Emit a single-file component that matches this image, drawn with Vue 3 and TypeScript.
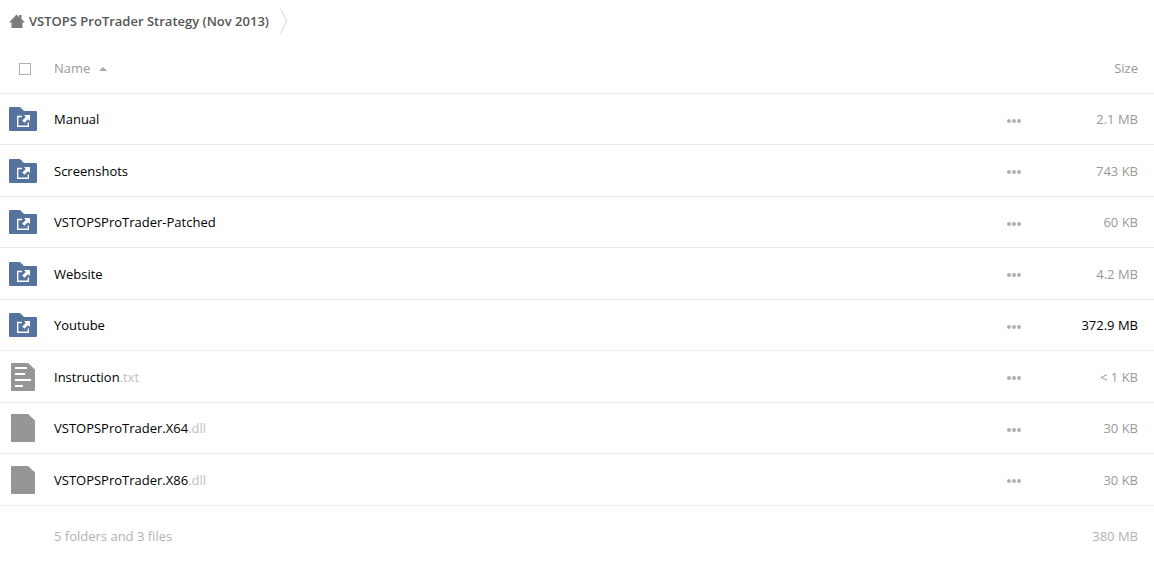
<script setup lang="ts">
import { ref, computed } from 'vue'

interface Entry {
  kind: 'folder' | 'text' | 'file'
  name: string
  ext?: string
  size: string
  large?: boolean
}

const entries: Entry[] = [
  { kind: 'folder', name: 'Manual', size: '2.1 MB' },
  { kind: 'folder', name: 'Screenshots', size: '743 KB' },
  { kind: 'folder', name: 'VSTOPSProTrader-Patched', size: '60 KB' },
  { kind: 'folder', name: 'Website', size: '4.2 MB' },
  { kind: 'folder', name: 'Youtube', size: '372.9 MB', large: true },
  { kind: 'text', name: 'Instruction', ext: '.txt', size: '< 1 KB' },
  { kind: 'file', name: 'VSTOPSProTrader.X64', ext: '.dll', size: '30 KB' },
  { kind: 'file', name: 'VSTOPSProTrader.X86', ext: '.dll', size: '30 KB' },
]

const allSelected = ref(false)
const ascending = ref(true)
const rows = computed(() => (ascending.value ? entries : [...entries].reverse()))
</script>

<template>
  <main class="listing">
    <nav class="crumbs" aria-label="Breadcrumb">
      <a class="crumb" href="#">
        <svg class="home" width="16" height="14" viewBox="0 0 16 14" aria-hidden="true">
          <path d="M7.5 0.5 L10 3 V1 H12.5 V5 L16 8.5 H13.5 V14 H2.5 V8.5 H0 Z" fill="#7d7d7d" />
        </svg>
        <span>VSTOPS ProTrader Strategy (Nov 2013)</span>
      </a>
      <svg class="chevron" width="8" height="24" viewBox="0 0 8 24" aria-hidden="true">
        <path d="M0.5 0 L7 12 L0.5 24" fill="none" stroke="#d4d4d4" />
      </svg>
    </nav>

    <table class="files">
      <thead>
        <tr>
          <th class="col-icon">
            <input v-model="allSelected" class="check" type="checkbox" aria-label="Select all" />
          </th>
          <th class="col-name">
            <button class="sort" type="button" @click="ascending = !ascending">
              Name
              <svg class="arrow" :class="{ down: !ascending }" width="8" height="4" viewBox="0 0 8 4" aria-hidden="true">
                <path d="M4 0 L8 4 H0 Z" fill="#a6a6a6" />
              </svg>
            </button>
          </th>
          <th class="col-menu"></th>
          <th class="col-size">Size</th>
        </tr>
      </thead>
      <tbody>
        <tr v-for="row in rows" :key="row.name">
          <td class="col-icon">
            <svg v-if="row.kind === 'folder'" class="icon" width="28" height="24" viewBox="0 0 28 24" aria-hidden="true">
              <path d="M0 1 Q0 0 1 0 H10 Q11 0 11.6 0.6 L15 4 H27 Q28 4 28 5 V23 Q28 24 27 24 H1 Q0 24 0 23 Z" fill="#55739c" />
              <path d="M13 9.5 H8.7 V19.2 H19.3 V15.5" fill="none" stroke="#fff" stroke-width="1.4" />
              <path d="M15 8 H21 V14 L19 12.2 L15.4 15.8 L13.2 13.6 L16.8 10 Z" fill="#fff" />
            </svg>
            <svg v-else class="icon doc" width="24" height="28" viewBox="0 0 24 28" aria-hidden="true">
              <path d="M0 1 Q0 0 1 0 H17 L24 6.5 V27 Q24 28 23 28 H1 Q0 28 0 27 Z" fill="#969696" />
              <path v-if="row.kind === 'text'" d="M4 4 H16 V6 H4 Z M4 10 H14 V12 H4 Z M4 16 H20 V18 H4 Z M4 22 H12 V24 H4 Z" fill="#fff" />
            </svg>
          </td>
          <td class="col-name">
            <a href="#">{{ row.name }}<span v-if="row.ext" class="ext">{{ row.ext }}</span></a>
          </td>
          <td class="col-menu">
            <button class="more" type="button" :aria-label="'Actions for ' + row.name">
              <svg width="14" height="4" viewBox="0 0 14 4" aria-hidden="true">
                <g fill="#b0b0b0">
                  <circle cx="2" cy="2" r="2" />
                  <circle cx="7" cy="2" r="2" />
                  <circle cx="12" cy="2" r="2" />
                </g>
              </svg>
            </button>
          </td>
          <td class="col-size" :class="{ large: row.large }">{{ row.size }}</td>
        </tr>
      </tbody>
      <tfoot>
        <tr>
          <td></td>
          <td class="col-name">5 folders and 3 files</td>
          <td></td>
          <td class="col-size">380 MB</td>
        </tr>
      </tfoot>
    </table>
  </main>
</template>

<style>
body {
  margin: 0;
  background: #fff;
}
</style>

<style scoped>
.listing {
  font: 13px/18px "Open Sans", "Noto Sans", sans-serif;
  color: #999;
}

a {
  color: #000;
  text-decoration: none;
}

button {
  display: block;
  padding: 0;
  border: 0;
  background: none;
  font: inherit;
  color: inherit;
  cursor: pointer;
}

svg {
  display: block;
}

.crumbs {
  display: flex;
  align-items: center;
  gap: 11px;
  height: 42px;
  padding-left: 9px;
}

.crumb {
  display: flex;
  align-items: center;
  gap: 4px;
  font-weight: 600;
  color: #555;
}

.files {
  width: 100%;
  table-layout: fixed;
  border-collapse: separate;
  border-spacing: 0;
}

th,
td {
  box-sizing: border-box;
  height: 51px;
  padding: 0;
  border-bottom: 1px solid #ececec;
  text-align: left;
  font-weight: 400;
  vertical-align: middle;
}

thead th {
  height: 52px;
}

thead th.col-icon {
  padding-top: 2px;
}

tbody tr:nth-child(even) td {
  height: 52px;
  padding-top: 1px;
}

th.col-icon,
td.col-icon {
  width: 54px;
}

.icon {
  margin-left: 9px;
}

.icon.doc {
  margin-left: 11px;
}

.check {
  display: block;
  appearance: none;
  box-sizing: border-box;
  width: 12px;
  height: 12px;
  margin: 0 0 0 19px;
  border: 1px solid #b0b0b0;
  background: #fff;
}

.check:checked {
  background: #999;
}

.sort {
  display: flex;
  align-items: center;
  gap: 9px;
}

.arrow {
  margin-top: 2px;
}

.arrow.down {
  transform: rotate(180deg);
}

.ext {
  color: #bfbfbf;
}

th.col-menu,
td.col-menu {
  width: 54px;
}

tbody tr td.col-menu,
tbody tr:nth-child(even) td.col-menu {
  padding-top: 15px;
  vertical-align: top;
}

.more {
  padding: 10px 7px;
}

th.col-size,
td.col-size {
  width: 100px;
  padding-right: 16px;
  text-align: right;
}

td.large {
  color: #000;
}

tfoot td {
  height: 60px;
  border-bottom: 0;
  color: #b3b3b3;
}
</style>
